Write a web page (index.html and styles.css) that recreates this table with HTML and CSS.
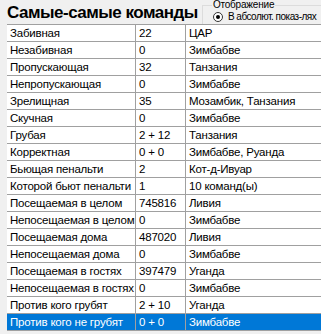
FILE: index.html
```html
<!DOCTYPE html>
<html lang="ru">
<head>
    <meta charset="UTF-8">
    <title>Самые-самые команды</title>
    <link rel="stylesheet" href="styles.css">
</head>
<body>

<div class="header">
    <h2>Самые-самые команды</h2>
    <fieldset class="mode">
        <legend>Отображение</legend>
        <label class="radio">
            <span class="radio-dot"></span>
            В абсолют. показ-лях
        </label>
    </fieldset>
</div>

<div class="grid">
    <div class="row"><span>Забивная</span><span>22</span><span>ЦАР</span></div>
    <div class="row"><span>Незабивная</span><span>0</span><span>Зимбабве</span></div>
    <div class="row"><span>Пропускающая</span><span>32</span><span>Танзания</span></div>
    <div class="row"><span>Непропускающая</span><span>0</span><span>Зимбабве</span></div>
    <div class="row"><span>Зрелищная</span><span>35</span><span>Мозамбик, Танзания</span></div>
    <div class="row"><span>Скучная</span><span>0</span><span>Зимбабве</span></div>
    <div class="row"><span>Грубая</span><span>2 + 12</span><span>Танзания</span></div>
    <div class="row"><span>Корректная</span><span>0 + 0</span><span>Зимбабве, Руанда</span></div>
    <div class="row"><span>Бьющая пенальти</span><span>2</span><span>Кот-д-Ивуар</span></div>
    <div class="row"><span>Которой бьют пенальти</span><span>1</span><span>10 команд(ы)</span></div>
    <div class="row"><span>Посещаемая в целом</span><span>745816</span><span>Ливия</span></div>
    <div class="row"><span>Непосещаемая в целом</span><span>0</span><span>Зимбабве</span></div>
    <div class="row"><span>Посещаемая дома</span><span>487020</span><span>Ливия</span></div>
    <div class="row"><span>Непосещаемая дома</span><span>0</span><span>Зимбабве</span></div>
    <div class="row"><span>Посещаемая в гостях</span><span>397479</span><span>Уганда</span></div>
    <div class="row"><span>Непосещаемая в гостях</span><span>0</span><span>Зимбабве</span></div>
    <div class="row"><span>Против кого грубят</span><span>2 + 10</span><span>Уганда</span></div>
    <div class="row selected"><span>Против кого не грубят</span><span>0 + 0</span><span>Зимбабве</span></div>
</div>

</body>
</html>
```

FILE: styles.css
```css
/* Общие стили окна */
body {
    margin: 0;
    background-color: #f0f0f0;
    font-family: 'Liberation Sans', Arial, sans-serif;
    color: #000;
    overflow: hidden;
}

/* Заголовок и переключатель */
.header {
    display: flex;
    height: 24px;
    padding-left: 7px;
}

h2 {
    margin: 0;
    font-size: 17px;
    font-weight: 700;
    letter-spacing: -0.5px;
    line-height: 25px;
    white-space: nowrap;
}

.mode {
    flex: none;
    width: 140px;
    height: 24px;
    margin: 0 0 0 4px;
    padding: 0 0 0 10px;
    border: 1px solid #dcdcdc;
    border-bottom: none;
    box-sizing: border-box;
}

.mode legend {
    padding: 0 1px;
    margin-left: -1px;
    font-size: 10px;
    letter-spacing: -0.2px;
    line-height: 10px;
}

.radio {
    display: flex;
    align-items: center;
    gap: 5px;
    font-size: 10px;
    letter-spacing: -0.5px;
    line-height: 12px;
    margin-top: 1px;
    white-space: nowrap;
}

.radio-dot {
    width: 8px;
    height: 8px;
    border: 1px solid #333;
    border-radius: 50%;
    background: #fff;
    display: flex;
    align-items: center;
    justify-content: center;
}

.radio-dot::after {
    content: "";
    width: 4px;
    height: 4px;
    border-radius: 50%;
    background: #000;
}

/* Таблица результатов */
.grid {
    margin-left: 7px;
    border-top: 1px solid #a0a0a0;
    background: #fff;
    font-size: 11.5px;
    letter-spacing: -0.2px;
}

.row {
    display: grid;
    grid-template-columns: 129px 50px 1fr;
    height: 17px;
}

.row span {
    padding-left: 3px;
    line-height: 16px;
    border-bottom: 1px solid #a0a0a0;
    border-right: 1px solid #a0a0a0;
    white-space: nowrap;
    overflow: hidden;
}

.row span:last-child {
    border-right: none;
}

.row.selected span {
    background-color: #0078d7;
    color: #fff;
}
```
